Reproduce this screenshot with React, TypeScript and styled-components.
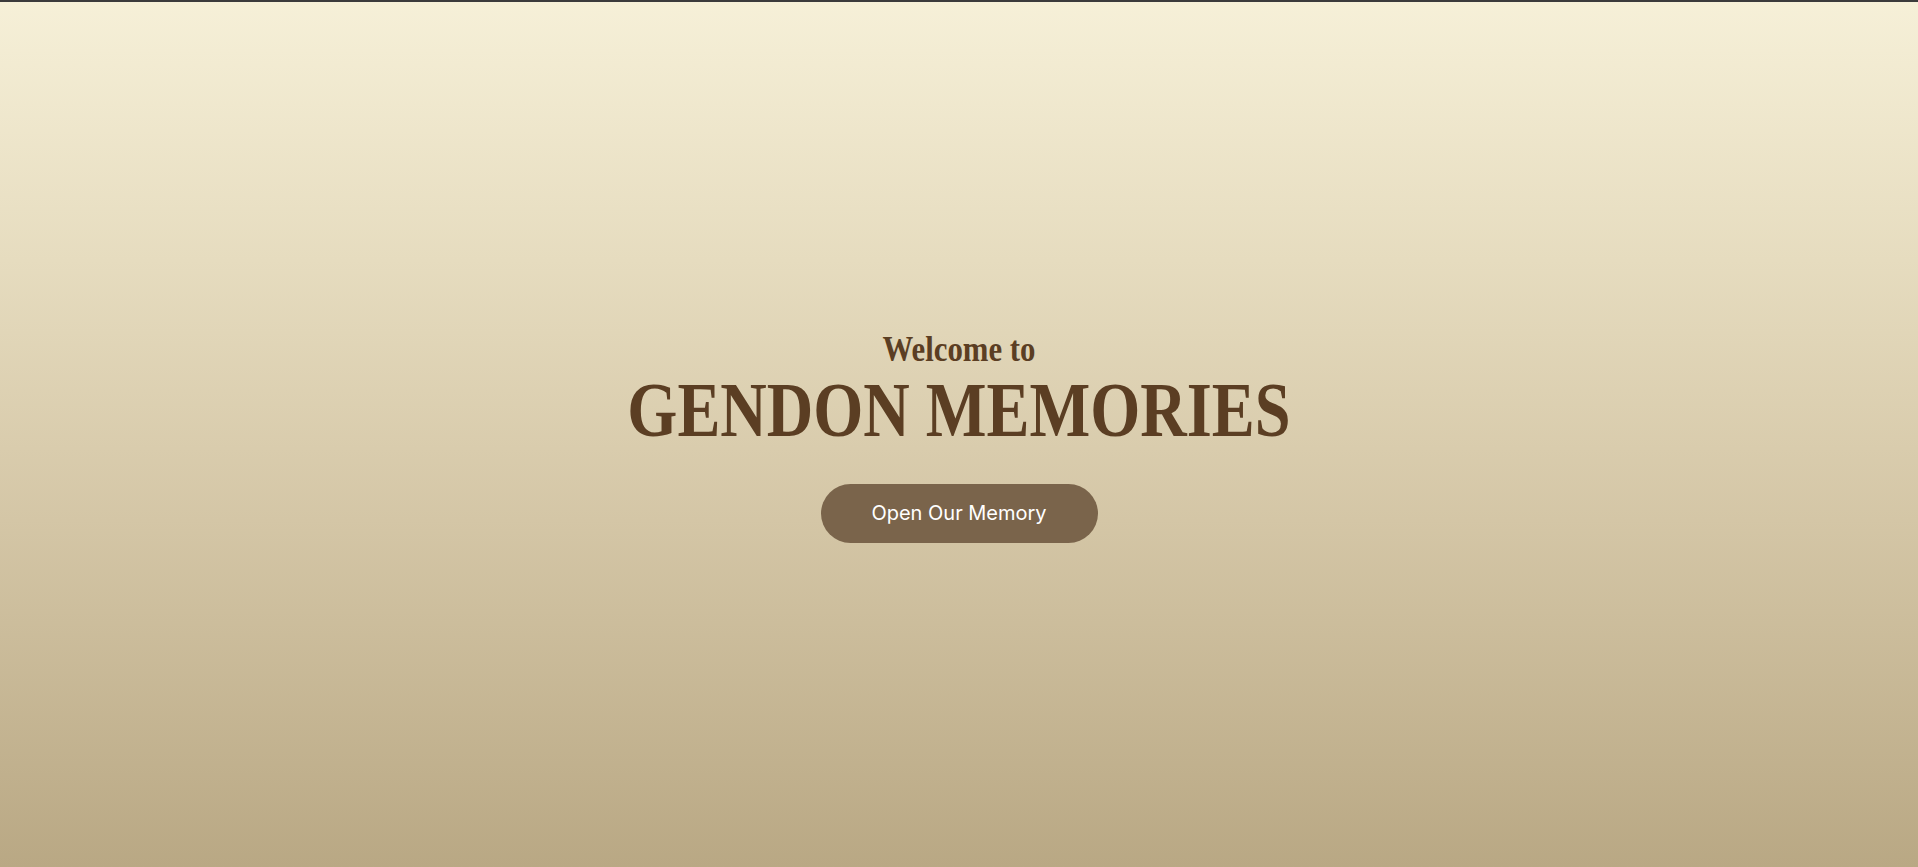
import React from "react";
import styled, { createGlobalStyle } from "styled-components";

const GlobalStyle = createGlobalStyle`
  html, body { margin: 0; padding: 0; }
  body { background: #b9a884; }
  ::-webkit-scrollbar { width: 4px; }
  ::-webkit-scrollbar-track { background: #f1f1f1; }
  ::-webkit-scrollbar-thumb { background: #808080; }
`;

const TopBar = styled.div`
  position: fixed;
  top: 0;
  left: 0;
  right: 0;
  height: 2px;
  background: #3b3b3b;
  z-index: 10;
`;

const Hero = styled.section`
  min-height: 867px;
  box-sizing: border-box;
  padding-top: 2px;
  display: flex;
  flex-direction: column;
  align-items: center;
  justify-content: center;
  background: linear-gradient(180deg, #f6f0d8 0%, #e6dcbf 30%, #d4c6a6 60%, #b9a884 100%);
`;

const Welcome = styled.h2`
  margin: 5px 0 0;
  font-family: "Liberation Serif", "DejaVu Serif", serif;
  font-weight: 700;
  font-size: 35px;
  line-height: 1;
  color: #5b3e23;
  transform: scaleX(0.88);
`;

const Title = styled.h1`
  margin: 4px 0 0;
  font-family: "Liberation Serif", "DejaVu Serif", serif;
  font-weight: 700;
  font-size: 78px;
  line-height: 1;
  color: #5b3e23;
  transform: scaleX(0.825);
  white-space: nowrap;
`;

const OpenButton = styled.button`
  margin-top: 35px;
  width: 277px;
  height: 59px;
  border: none;
  border-radius: 30px;
  background: #7a644b;
  color: #ffffff;
  font-family: Inter, "Noto Sans", sans-serif;
  font-size: 20px;
  font-weight: 400;
  cursor: pointer;
`;

const Rest = styled.div`
  height: 11400px;
  background: #b9a884;
`;

export default function App() {
  return (
    <>
      <GlobalStyle />
      <TopBar />
      <Hero>
        <Welcome>Welcome to</Welcome>
        <Title>GENDON MEMORIES</Title>
        <OpenButton>Open Our Memory</OpenButton>
      </Hero>
      <Rest />
    </>
  );
}
